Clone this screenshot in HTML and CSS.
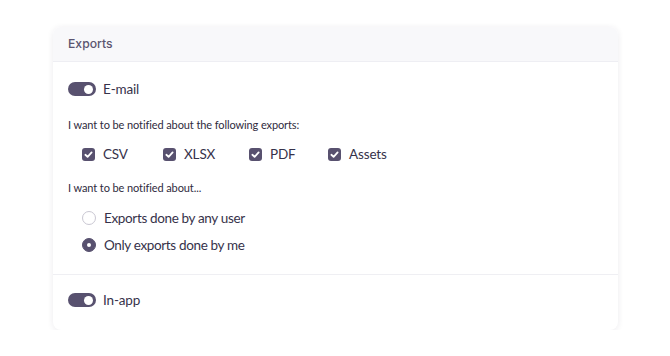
FILE: index.html
```html
<!DOCTYPE html>
<html lang="en">
<head>
  <meta charset="UTF-8">
  <title>Exports</title>
  <link rel="stylesheet" href="styles.css">
</head>
<body>
  <div class="card">
    <div class="card-header">Exports</div>

    <div class="section">
      <label class="toggle-row">
        <span class="toggle on"><span class="knob"></span></span>
        <span>E-mail</span>
      </label>

      <p class="hint">I want to be notified about the following exports:</p>
      <div class="checks">
        <label class="check"><span class="box"><svg viewBox="0 0 10 10"><path d="M2.6 5.2 4.3 6.8 7.4 3.4"/></svg></span>CSV</label>
        <label class="check"><span class="box"><svg viewBox="0 0 10 10"><path d="M2.6 5.2 4.3 6.8 7.4 3.4"/></svg></span>XLSX</label>
        <label class="check"><span class="box"><svg viewBox="0 0 10 10"><path d="M2.6 5.2 4.3 6.8 7.4 3.4"/></svg></span>PDF</label>
        <label class="check"><span class="box"><svg viewBox="0 0 10 10"><path d="M2.6 5.2 4.3 6.8 7.4 3.4"/></svg></span>Assets</label>
      </div>

      <p class="hint second">I want to be notified about...</p>
      <div class="radios">
        <label class="radio"><span class="dot"></span>Exports done by any user</label>
        <label class="radio"><span class="dot on"></span>Only exports done by me</label>
      </div>
    </div>

    <div class="section last">
      <label class="toggle-row">
        <span class="toggle on"><span class="knob"></span></span>
        <span>In-app</span>
      </label>
    </div>
  </div>
</body>
</html>
```

FILE: styles.css
```css
body {
  margin: 0;
  background: #fff;
  font-family: Lato, "Noto Sans", sans-serif;
  color: #36324a;
}

.card {
  width: 565px;
  margin: 27px 0 0 53px;
  background: #fff;
  border-radius: 8px;
  box-shadow: 0 1px 6px rgba(40, 35, 70, 0.09);
  overflow: hidden;
}

.card-header {
  height: 34px;
  line-height: 34px;
  padding-left: 15px;
  background: #f8f8fa;
  border-bottom: 1px solid #eeeef3;
  font-family: Inter, "Noto Sans", sans-serif;
  font-size: 12.2px;
  font-weight: 500;
  color: #5b5570;
}

.section {
  padding: 20px 15px 21px;
  border-bottom: 1px solid #efeff3;
}

.section.last {
  padding: 18px 15px 23px;
  border-bottom: none;
}

.toggle-row {
  display: flex;
  align-items: center;
  gap: 7px;
  font-size: 13.5px;
  letter-spacing: -0.15px;
  height: 14px;
}

.toggle {
  width: 28px;
  height: 14px;
  border-radius: 7px;
  background: #58516f;
  position: relative;
}

.toggle .knob {
  position: absolute;
  top: 2.5px;
  right: 3px;
  width: 9px;
  height: 9px;
  border-radius: 50%;
  background: #fff;
}

.hint {
  margin: 22px 0 0;
  font-size: 11px;
  letter-spacing: -0.1px;
  line-height: 14px;
  color: #2f2b40;
}

.hint.second {
  margin-top: 19px;
}

.checks {
  display: flex;
  margin: 14px 0 0 14px;
}

.check {
  display: flex;
  align-items: center;
  gap: 8px;
  font-size: 13.5px;
  letter-spacing: -0.15px;
  height: 16px;
}

.check:nth-child(1) { width: 81px; }
.check:nth-child(2) { width: 86px; }
.check:nth-child(3) { width: 79px; }

.box {
  width: 13px;
  height: 13px;
  border-radius: 3px;
  background: #58516f;
  display: flex;
}

.box svg {
  width: 13px;
  height: 13px;
  fill: none;
  stroke: #fff;
  stroke-width: 1.4;
  stroke-linecap: round;
  stroke-linejoin: round;
}

.radios {
  margin: 15px 0 0 14px;
  display: flex;
  flex-direction: column;
  gap: 11px;
}

.radio {
  display: flex;
  align-items: center;
  gap: 8px;
  font-size: 13.5px;
  letter-spacing: -0.35px;
  height: 16px;
}

.dot {
  width: 12px;
  height: 12px;
  border-radius: 50%;
  border: 1px solid #c9c7d2;
  background: #fff;
  box-sizing: content-box;
  position: relative;
}

.dot.on {
  border-color: #58516f;
  background: #58516f;
}

.dot.on::after {
  content: "";
  position: absolute;
  top: 4px;
  left: 4px;
  width: 4px;
  height: 4px;
  border-radius: 50%;
  background: #fff;
}
```
